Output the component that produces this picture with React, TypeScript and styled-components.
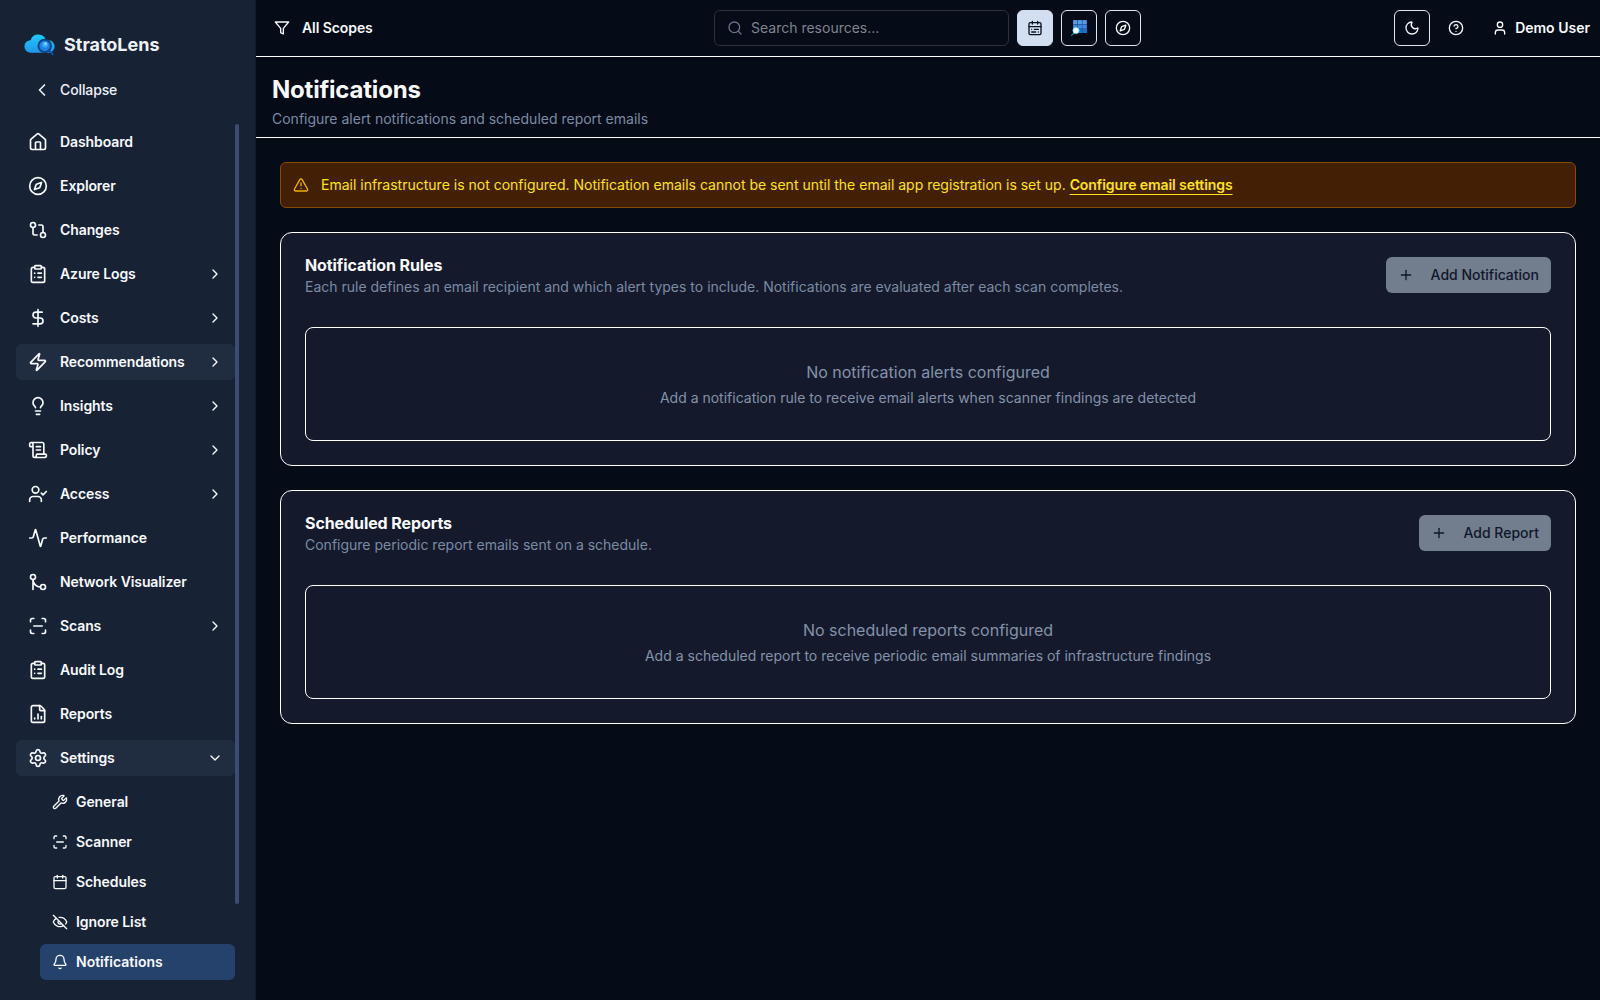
import React from "react";
import styled, { createGlobalStyle, css } from "styled-components";
import {
  Activity, Bell, Calendar, ChevronDown, ChevronLeft, ChevronRight, CircleQuestionMark, ClipboardList,
  Compass, DollarSign, EyeOff, FileChartColumn, GitCompare, GitMerge, House, Lightbulb,
  Moon, Plus, ScanLine, ScrollText, Search, Settings, TriangleAlert, User, UserCheck, Wrench, Zap,
  type LucideIcon,
} from "lucide-react";

const GlobalStyle = createGlobalStyle`
  * { box-sizing: border-box; }
  body {
    margin: 0;
    background: #050b17;
    color: #f8fafc;
    font-family: Inter, "Liberation Sans", sans-serif;
    font-size: 14px;
    line-height: 20px;
  }
  h1, h2, p { margin: 0; }
  button, input { font: inherit; color: inherit; }
`;

const Shell = styled.div`
  display: flex;
  height: 1000px;
  overflow: hidden;
`;

const Sidebar = styled.aside`
  width: 256px;
  flex: none;
  display: flex;
  flex-direction: column;
  padding: 24px 16px 0;
  background: #172335;
  border-right: 1px solid #101a2a;
`;

const Brand = styled.div`
  display: flex;
  align-items: center;
  gap: 8px;
  height: 41px;
  padding-left: 8px;
  font-size: 18px;
  font-weight: 700;
  line-height: 28px;
  color: #eef1f5;
`;

const CollapseButton = styled.button`
  display: flex;
  align-items: center;
  gap: 8px;
  height: 36px;
  margin-top: 7px;
  padding: 0 16px;
  border: 0;
  background: none;
  font-weight: 500;
  letter-spacing: -0.12px;
  color: #eef1f5;
`;

const NavScroll = styled.nav`
  display: flex;
  margin-top: 16px;
  height: 876px;
`;

const NavList = styled.div`
  width: 219px;
  display: flex;
  flex-direction: column;
  gap: 8px;
`;

const ScrollThumb = styled.div`
  width: 4px;
  height: 780px;
  border-radius: 2px;
  background: #3c4c75;
`;

const NavItem = styled.div<{ $open?: boolean }>`
  display: flex;
  align-items: center;
  gap: 12px;
  flex: none;
  height: 36px;
  padding: 0 12px;
  border-radius: 6px;
  font-weight: 600;
  letter-spacing: -0.1px;
  ${(p) => p.$open && css`background: #202d41;`}
  & > span { flex: 1; }
`;

const SubList = styled.div`
  display: flex;
  flex-direction: column;
  gap: 4px;
  margin-left: 24px;
`;

const SubItem = styled.div<{ $active?: boolean }>`
  display: flex;
  align-items: center;
  gap: 8px;
  height: 36px;
  padding: 0 12px;
  border-radius: 6px;
  font-weight: 600;
  letter-spacing: ${(p) => (p.$active ? "0" : "-0.08px")};
  ${(p) => p.$active && css`background: #24426c;`}
`;

const Main = styled.div`
  flex: 1;
  min-width: 0;
`;

const TopBar = styled.header`
  display: grid;
  grid-template-columns: 1fr auto 1fr;
  align-items: center;
  height: 57px;
  padding: 0 10px 0 18px;
  border-bottom: 1px solid #fff;
`;

const Scope = styled.div`
  display: flex;
  align-items: center;
  gap: 12px;
  font-weight: 600;
  letter-spacing: -0.08px;
`;

const TopCenter = styled.div`
  display: flex;
  gap: 8px;
  margin-left: -9px;
`;

const SearchBox = styled.label`
  display: flex;
  align-items: center;
  gap: 8px;
  width: 295px;
  height: 36px;
  padding: 0 12px;
  border: 1px solid #2c313d;
  border-radius: 6px;
  color: #64748b;
  input {
    flex: 1;
    min-width: 0;
    padding: 0;
    border: 0;
    outline: 0;
    background: none;
  }
  input::placeholder { color: #7f848e; opacity: 1; }
`;

const IconButton = styled.button<{ $filled?: boolean }>`
  display: grid;
  place-items: center;
  width: 36px;
  height: 36px;
  padding: 0;
  border: 1px solid ${(p) => (p.$filled ? "#d1dff0" : "#e4e6ea")};
  border-radius: 6px;
  background: ${(p) => (p.$filled ? "#d1dff0" : "transparent")};
  color: ${(p) => (p.$filled ? "#0b1220" : "#f8fafc")};
`;

const Account = styled.div`
  display: flex;
  align-items: center;
  justify-content: flex-end;
  font-weight: 600;
`;

const HelpSlot = styled.div`
  display: grid;
  place-items: center;
  width: 36px;
  margin: 0 18px 0 8px;
`;

const UserName = styled.div`
  display: flex;
  align-items: center;
  gap: 7px;
`;

const PageHead = styled.div`
  height: 81px;
  padding: 17px 16px 0;
  border-bottom: 1px solid #fff;
`;

const Title = styled.h1`
  margin-bottom: 3px;
  font-size: 24px;
  line-height: 32px;
  font-weight: 700;
  letter-spacing: -0.2px;
`;

const Muted = styled.p`
  color: #7b8ba4;
`;

const Content = styled.main`
  display: flex;
  flex-direction: column;
  gap: 24px;
  padding: 24px;
`;

const Alert = styled.div`
  display: flex;
  align-items: center;
  gap: 12px;
  height: 46px;
  padding: 0 12px;
  border: 1px solid #874b00;
  border-radius: 6px;
  background: #432005;
  color: #ffe31a;
  svg { color: #efb100; }
  a {
    font-weight: 600;
    letter-spacing: -0.08px;
    text-decoration: underline;
    text-underline-offset: 4px;
  }
`;

const Card = styled.section`
  display: flex;
  flex-direction: column;
  gap: 24px;
  height: 234px;
  padding: 24px;
  border: 1px solid #fff;
  border-radius: 12px;
  background: #141a2b;
`;

const CardHead = styled.div`
  display: flex;
  justify-content: space-between;
  align-items: flex-start;
  height: 46px;
`;

const CardTitle = styled.h2`
  font-size: 16px;
  line-height: 16px;
  font-weight: 700;
  letter-spacing: -0.09px;
  margin-bottom: 4px;
`;

const AddButton = styled.button`
  display: flex;
  align-items: center;
  gap: 17px;
  height: 36px;
  padding: 0 12px;
  border: 0;
  border-radius: 6px;
  background: #727d8e;
  color: #10172a;
  font-weight: 500;
`;

const Empty = styled.div`
  display: flex;
  flex-direction: column;
  align-items: center;
  justify-content: center;
  gap: 4px;
  height: 114px;
  border: 1px solid #fff;
  border-radius: 8px;
  color: #8492aa;
`;

const EmptyTitle = styled.p`
  font-size: 16px;
  line-height: 24px;
`;

function CloudLogo() {
  return (
    <svg width="32" height="24" viewBox="0 0 32 24">
      <defs>
        <linearGradient id="cloud" x1="0" y1="0" x2="0" y2="1">
          <stop offset="0" stopColor="#1fcbfc" />
          <stop offset="1" stopColor="#2196ec" />
        </linearGradient>
      </defs>
      <path d="M6.8 19.8A6.3 6.3 0 0 1 6.6 7.2 8 8 0 0 1 22 7.3a6.3 6.3 0 0 1 4 12.5z" fill="url(#cloud)" />
      <circle cx="20.7" cy="12.9" r="7.2" fill="#173a61" />
      <path d="m25.2 17.6 3.4 3.7" stroke="#0f4fa3" strokeWidth="2" strokeLinecap="round" />
      <circle cx="20.7" cy="12.9" r="5.8" fill="#1c84e4" stroke="#0d4a94" strokeWidth="1.1" />
      <circle cx="21" cy="11.6" r="2.9" fill="#41a9f3" />
      <circle cx="21.6" cy="10.8" r="1.2" fill="#9adcfb" />
    </svg>
  );
}

function FilterIcon() {
  return (
    <svg width="16" height="16" viewBox="0 0 24 24" fill="none" stroke="currentColor" strokeWidth="2" strokeLinecap="round" strokeLinejoin="round">
      <path d="M22 3H2l8 9.46V19l4 2v-8.54z" />
    </svg>
  );
}

function AgendaIcon() {
  return (
    <svg width="16" height="16" viewBox="0 0 24 24" fill="none" stroke="currentColor" strokeWidth="2" strokeLinecap="round" strokeLinejoin="round">
      <path d="M8 2v4M16 2v4M3 10h18M11 14h6M7 14h0M7 18h6M17 18h0" />
      <rect x="3" y="4" width="18" height="18" rx="2" />
    </svg>
  );
}

function ResourceGridIcon() {
  return (
    <svg width="16" height="16" viewBox="0 0 16 16">
      <rect x="2" y="0" width="14" height="13" fill="#1d4f91" />
      {[0, 1, 2].map((r) =>
        [0, 1, 2].map((c) => (
          <rect key={`${r}${c}`} x={2.2 + c * 4.7} y={0.2 + r * 4.5} width="4" height="3.8" fill={["#5a9be8", "#3f8be0", "#0f78d4"][r]} />
        )),
      )}
      <path d="M.6 15.4 4 12" stroke="#1490a8" strokeWidth="1.2" strokeLinecap="round" />
      <circle cx="5" cy="10.5" r="3.1" fill="#effcff" stroke="#50e6ff" strokeWidth=".6" />
    </svg>
  );
}

type Entry = { icon: LucideIcon; label: string; more?: boolean; lit?: boolean };

const entries: Entry[] = [
  { icon: House, label: "Dashboard" },
  { icon: Compass, label: "Explorer" },
  { icon: GitCompare, label: "Changes" },
  { icon: ClipboardList, label: "Azure Logs", more: true },
  { icon: DollarSign, label: "Costs", more: true },
  { icon: Zap, label: "Recommendations", more: true, lit: true },
  { icon: Lightbulb, label: "Insights", more: true },
  { icon: ScrollText, label: "Policy", more: true },
  { icon: UserCheck, label: "Access", more: true },
  { icon: Activity, label: "Performance" },
  { icon: GitMerge, label: "Network Visualizer" },
  { icon: ScanLine, label: "Scans", more: true },
  { icon: ClipboardList, label: "Audit Log" },
  { icon: FileChartColumn, label: "Reports" },
];

const settings: Entry[] = [
  { icon: Wrench, label: "General" },
  { icon: ScanLine, label: "Scanner" },
  { icon: Calendar, label: "Schedules" },
  { icon: EyeOff, label: "Ignore List" },
  { icon: Bell, label: "Notifications", lit: true },
];

const sections = [
  {
    title: "Notification Rules",
    text: "Each rule defines an email recipient and which alert types to include. Notifications are evaluated after each scan completes.",
    action: "Add Notification",
    empty: "No notification alerts configured",
    hint: "Add a notification rule to receive email alerts when scanner findings are detected",
  },
  {
    title: "Scheduled Reports",
    text: "Configure periodic report emails sent on a schedule.",
    action: "Add Report",
    empty: "No scheduled reports configured",
    hint: "Add a scheduled report to receive periodic email summaries of infrastructure findings",
  },
];

export default function App() {
  return (
    <Shell>
      <GlobalStyle />
      <Sidebar>
        <Brand><CloudLogo />StratoLens</Brand>
        <CollapseButton><ChevronLeft size={20} />Collapse</CollapseButton>
        <NavScroll>
          <NavList>
            {entries.map(({ icon: Icon, label, more, lit }) => (
              <NavItem key={label} $open={lit}>
                <Icon size={20} />
                <span>{label}</span>
                {more && <ChevronRight size={16} />}
              </NavItem>
            ))}
            <NavItem $open>
              <Settings size={20} />
              <span>Settings</span>
              <ChevronDown size={16} />
            </NavItem>
            <SubList>
              {settings.map(({ icon: Icon, label, lit }) => (
                <SubItem key={label} $active={lit}><Icon size={16} />{label}</SubItem>
              ))}
            </SubList>
          </NavList>
          <ScrollThumb />
        </NavScroll>
      </Sidebar>
      <Main>
        <TopBar>
          <Scope><FilterIcon />All Scopes</Scope>
          <TopCenter>
            <SearchBox><Search size={16} /><input placeholder="Search resources..." /></SearchBox>
            <IconButton $filled><AgendaIcon /></IconButton>
            <IconButton><ResourceGridIcon /></IconButton>
            <IconButton><Compass size={16} /></IconButton>
          </TopCenter>
          <Account>
            <IconButton><Moon size={16} /></IconButton>
            <HelpSlot><CircleQuestionMark size={16} /></HelpSlot>
            <UserName><User size={16} />Demo User</UserName>
          </Account>
        </TopBar>
        <PageHead>
          <Title>Notifications</Title>
          <Muted>Configure alert notifications and scheduled report emails</Muted>
        </PageHead>
        <Content>
          <Alert>
            <TriangleAlert size={16} />
            <span>
              Email infrastructure is not configured. Notification emails cannot be sent until the email app registration is set up. <a>Configure email settings</a>
            </span>
          </Alert>
          {sections.map((s) => (
            <Card key={s.title}>
              <CardHead>
                <div>
                  <CardTitle>{s.title}</CardTitle>
                  <Muted>{s.text}</Muted>
                </div>
                <AddButton><Plus size={16} />{s.action}</AddButton>
              </CardHead>
              <Empty>
                <EmptyTitle>{s.empty}</EmptyTitle>
                <p>{s.hint}</p>
              </Empty>
            </Card>
          ))}
        </Content>
      </Main>
    </Shell>
  );
}
